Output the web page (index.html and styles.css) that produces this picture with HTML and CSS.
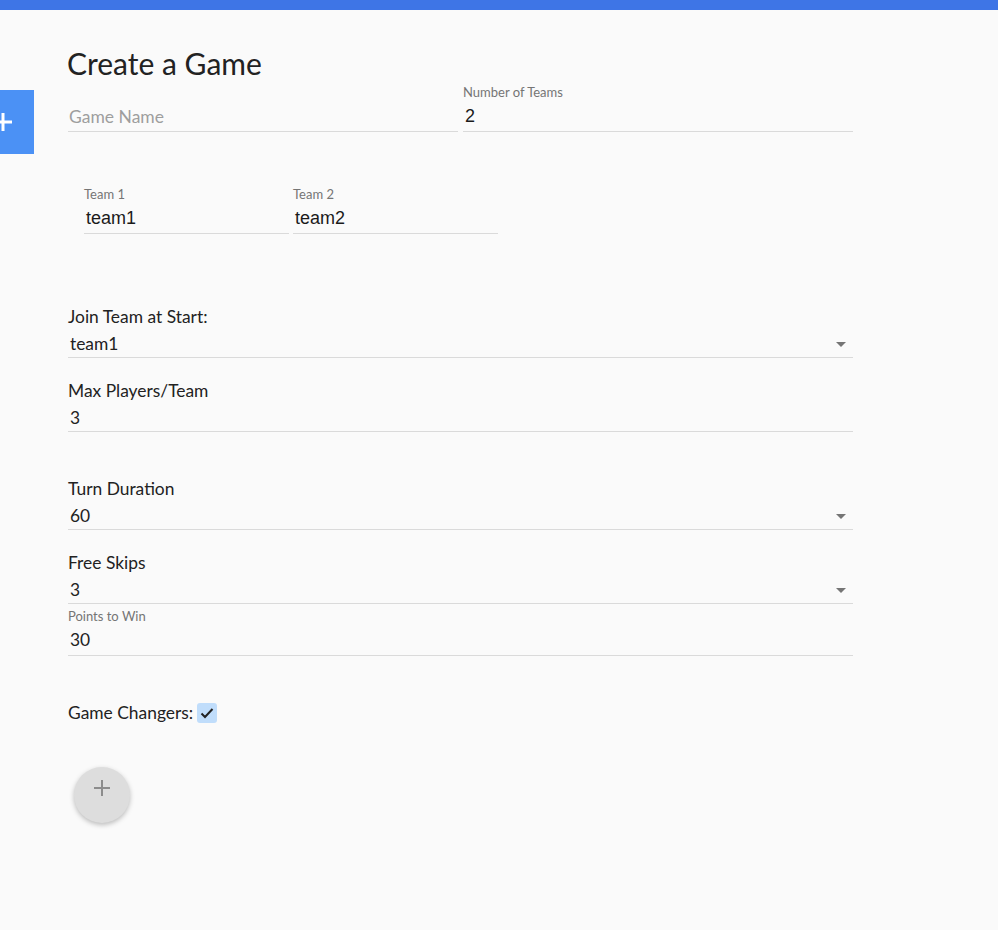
FILE: index.html
```html
<!DOCTYPE html>
<html>
<head>
<meta charset="utf-8">
<link rel="stylesheet" href="styles.css">
</head>
<body>
<div class="topbar"></div>
<button class="side-tab" aria-label="add">
  <svg width="20" height="20" viewBox="0 0 20 20"><path d="M10 1v18M1 10h18" stroke="#fff" stroke-width="3" fill="none"/></svg>
</button>
<main class="page">
  <h1 class="title">Create a Game</h1>
  <div class="row row-top">
    <div class="field w390">
      <div class="input placeholder">Game Name</div>
    </div>
    <div class="field w390">
      <div class="small-label">Number of Teams</div>
      <div class="input">2</div>
    </div>
  </div>
  <div class="row row-teams">
    <div class="field w205">
      <div class="small-label">Team 1</div>
      <div class="input">team1</div>
    </div>
    <div class="field w205">
      <div class="small-label">Team 2</div>
      <div class="input">team2</div>
    </div>
  </div>

  <div class="block join">
    <div class="label">Join Team at Start:</div>
    <div class="select"><span>team1</span><i class="arrow"></i></div>
  </div>
  <div class="block gap22">
    <div class="label">Max Players/Team</div>
    <div class="select"><span>3</span></div>
  </div>
  <div class="block gap46">
    <div class="label">Turn Duration</div>
    <div class="select"><span>60</span><i class="arrow"></i></div>
  </div>
  <div class="block gap22">
    <div class="label">Free Skips</div>
    <div class="select"><span>3</span><i class="arrow"></i></div>
  </div>
  <div class="block gap4">
    <div class="small-label">Points to Win</div>
    <div class="select tall"><span>30</span></div>
  </div>
  <div class="check-row">
    <span class="label">Game Changers:</span>
    <span class="checkbox">
      <svg width="14" height="12" viewBox="0 0 14 12"><path d="M1.5 6.5l3.5 3.5L12.5 2" stroke="#222" stroke-width="2" fill="none"/></svg>
    </span>
  </div>
  <button class="fab" aria-label="add">
    <svg width="16" height="16" viewBox="0 0 16 16"><path d="M8 0v16M0 8h16" stroke="#8c8c8c" stroke-width="2" fill="none"/></svg>
  </button>
</main>
</body>
</html>
```
FILE: styles.css
```css
html, body {
  margin: 0;
  padding: 0;
  background: #fafafa;
  height: 100%;
}
body {
  font-family: Lato, "Noto Sans", sans-serif;
  color: #212121;
  position: relative;
  overflow: hidden;
}
.topbar {
  height: 10px;
  background: #3e75e6;
}
.side-tab {
  position: absolute;
  left: -28px;
  top: 90px;
  width: 62px;
  height: 64px;
  border: 0;
  padding: 0;
  background: #4b91f5;
  display: flex;
  align-items: center;
  justify-content: center;
}
.page {
  padding-left: 67px;
  width: 786px;
}
.title {
  margin: 35px 0 0 0;
  font-size: 30px;
  line-height: 36px;
  font-weight: 400;
  color: #222;
}
.row {
  display: flex;
  align-items: flex-end;
}
.row-top {
  margin-top: 3px;
  margin-left: 1px;
  gap: 5px;
}
.row-teams {
  margin-top: 54px;
  margin-left: 17px;
  gap: 4px;
}
.w390 { width: 390px; }
.w205 { width: 205px; }
.small-label {
  font-size: 13px;
  line-height: 16px;
  color: #757575;
}
.input {
  height: 30px;
  padding-top: 1px;
  line-height: 31px;
  padding-left: 2px;
  font-family: "Liberation Sans", Arial, sans-serif;
  font-size: 18px;
  color: #1a1a1a;
  border-bottom: 1px solid #dadada;
}
.input.placeholder {
  font-family: Lato, sans-serif;
  font-size: 17.5px;
  color: #9e9e9e;
  padding-left: 1px;
}
.block {
  margin-left: 1px;
  width: 785px;
}
.join { margin-top: 72px; }
.gap22 { margin-top: 22px; }
.gap46 { margin-top: 46px; }
.gap4 { margin-top: 4px; }
.label {
  font-size: 17.4px;
  line-height: 22px;
  color: #222;
}
.select {
  height: 27px;
  padding-top: 2px;
  line-height: 27px;
  font-size: 17.4px;
  padding-left: 2px;
  border-bottom: 1px solid #dadada;
  display: flex;
  align-items: center;
  justify-content: space-between;
  padding-right: 7px;
  color: #222;
}
.select.tall {
  height: 31px;
  line-height: 31px;
  padding-top: 0;
}
.arrow {
  width: 0;
  height: 0;
  border-left: 5px solid transparent;
  border-right: 5px solid transparent;
  border-top: 5px solid #757575;
  margin-top: 1px;
}
.check-row {
  margin-top: 46px;
  margin-left: 1px;
  display: flex;
  align-items: center;
  gap: 4px;
  height: 22px;
}
.checkbox {
  width: 20px;
  height: 20px;
  border-radius: 3px;
  background: #c0ddfb;
  display: flex;
  align-items: center;
  justify-content: center;
}
.fab {
  margin-top: 43px;
  margin-left: 7px;
  width: 56px;
  height: 56px;
  border-radius: 50%;
  border: 0;
  padding: 0 0 14px 0;
  background: #dddddd;
  box-shadow: 0 2px 5px rgba(0,0,0,0.25);
  display: flex;
  align-items: center;
  justify-content: center;
}
```
